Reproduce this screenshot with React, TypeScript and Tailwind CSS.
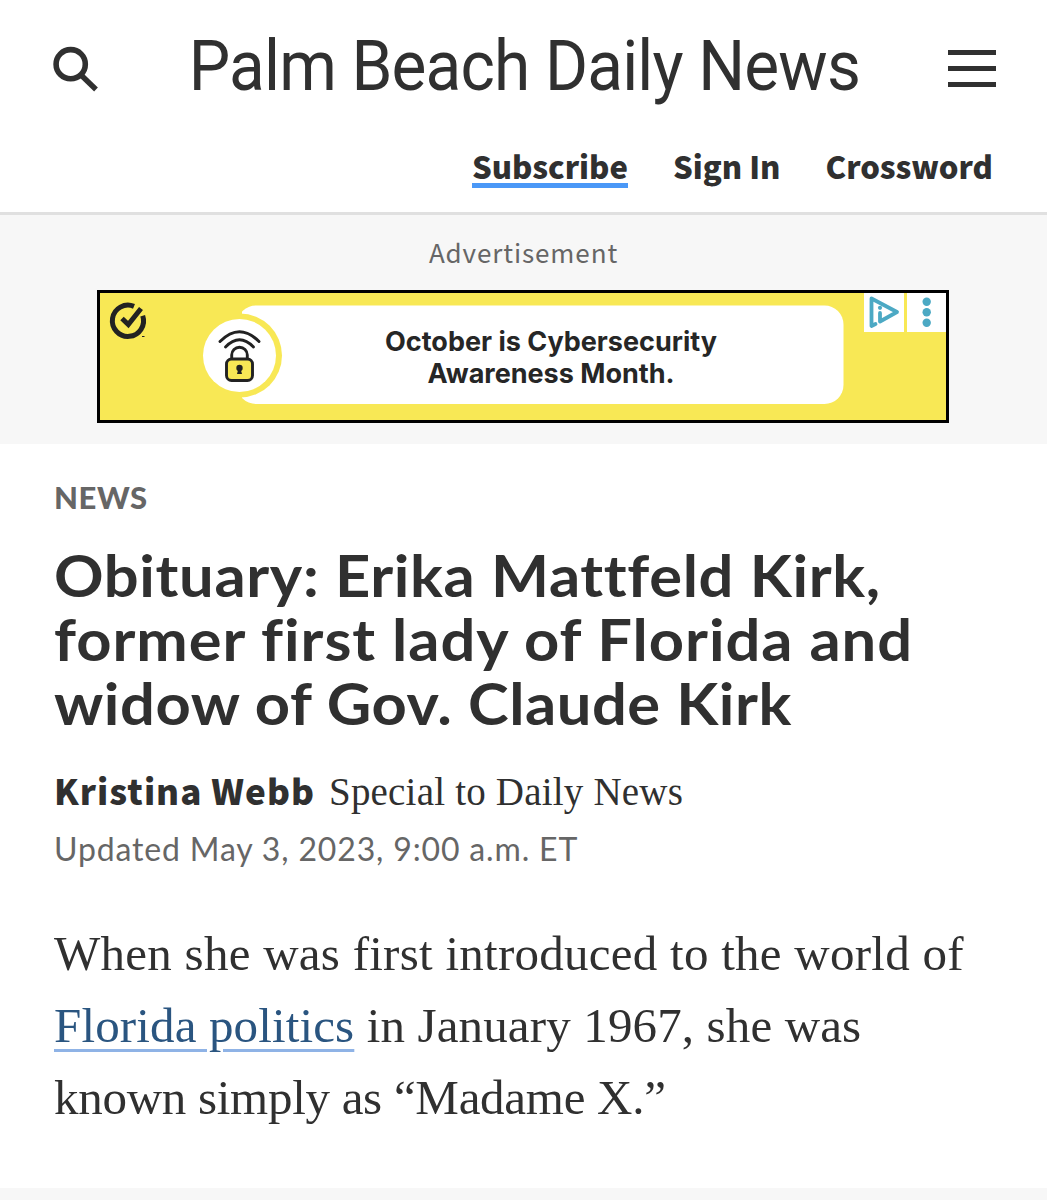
const navLink = "block whitespace-nowrap border-b-[5px] leading-[42px] h-[43px]";

function SearchIcon() {
	return (
		<svg width="46" height="46" viewBox="0 0 46 46" fill="none" stroke="#303030">
			<circle cx="17.700" cy="18.200" r="14.600" strokeWidth="5.600" />
			<path d="M28 29 L43 43.500" strokeWidth="5.400" />
		</svg>
	);
}

function MenuIcon() {
	return (
		<div className="flex w-12 flex-col gap-[11px]">
			<div className="h-[5px] bg-[#303030]" />
			<div className="h-[5px] bg-[#303030]" />
			<div className="h-[5px] bg-[#303030]" />
		</div>
	);
}

function Header() {
	return (
		<header className="h-[215px] border-b-[3px] border-[#e0e0e0] bg-white">
			<div className="flex h-[136px] items-start pl-[53px]">
				<div className="mt-[46px] w-[133px]">
					<SearchIcon />
				</div>
				<h1 className="mt-[26px] w-[762px] origin-left scale-x-[0.926] whitespace-nowrap pl-[3px] font-[Roboto,sans-serif] text-[71px] leading-[80px] tracking-[-0.9px]">
					Palm Beach Daily News
				</h1>
				<div className="mt-[50px]">
					<MenuIcon />
				</div>
			</div>
			<nav className="flex justify-end gap-[45px] pt-[9px] pr-[54px] font-['Noto_Sans_CJK_JP','Noto_Sans',sans-serif] text-[31px] font-black">
				<a className={`${navLink} border-[#4a98f7]`}>Subscribe</a>
				<a className={`${navLink} border-transparent`}>Sign In</a>
				<a className={`${navLink} border-transparent`}>Crossword</a>
			</nav>
		</header>
	);
}

function AdArt() {
	return (
		<svg width="846" height="127" viewBox="100 293 846 127" fill="none" className="absolute inset-0">
			<rect x="237" y="305.500" width="606.500" height="98.500" rx="19" fill="#fff" />
			<circle cx="240" cy="355.500" r="42" fill="#f8e855" />
			<rect x="200" y="297" width="42" height="118" fill="#f8e855" />
			<circle cx="239.500" cy="355.500" r="36.500" fill="#fff" />
			<g stroke="#222" strokeWidth="2.900" strokeLinecap="round">
				<path d="M220 341.500 Q239.500 322 259 341.500" />
				<path d="M225.500 347 Q239.500 332.500 253.500 347" />
				<path d="M231.700 359 V355 A7.800 7.800 0 0 1 247.300 355 V359" />
				<rect x="226.500" y="359" width="26" height="21.500" rx="5" fill="#f8e855" />
			</g>
			<circle cx="239.500" cy="368" r="3.200" fill="#222" />
			<path d="M238.600 368 H240.400 L242 374 H237 Z" fill="#222" />
			<path d="M134 306.400 A15.600 15.600 0 1 0 142.700 315.700" stroke="#222" strokeWidth="5" />
			<path d="M122 318.500 L128.300 324.500 L141 308.500" stroke="#222" strokeWidth="5" />
			<path d="M142 336.500 h2.500" stroke="#222" />
			<path d="M864 293 H904 V332 H864 Z M907 293 H946 V332 H907 Z" fill="#fff" />
			<path
				d="M875.500 324 L871.500 326 V298.500 L897 312 L880 321.500 V313"
				stroke="#4ca9c4"
				strokeWidth="3.800"
				strokeLinecap="round"
				strokeLinejoin="round"
			/>
			<circle cx="880" cy="307.800" r="2.100" fill="#4ca9c4" />
			<circle cx="926.700" cy="301.700" r="4.200" fill="#4ca9c4" />
			<circle cx="926.700" cy="312.200" r="4.200" fill="#4ca9c4" />
			<circle cx="926.700" cy="322.800" r="4.200" fill="#4ca9c4" />
		</svg>
	);
}

function Advertisement() {
	return (
		<section className="h-[229px] bg-[#f7f7f7] px-[97px] pt-[19px]">
			<p className="h-[56px] whitespace-nowrap text-center font-['Noto_Sans_CJK_JP','Noto_Sans',sans-serif] text-[26px] leading-[36px] tracking-[0.9px] text-[#666]">
				Advertisement
			</p>
			<div className="relative h-[133px] w-[852px] border-[3px] border-black bg-[#f8e855]">
				<AdArt />
				<p className="relative mt-[33px] ml-[56px] w-[790px] text-center font-[Inter,sans-serif] text-[27px] font-bold leading-[32px] text-[#262626]">
					October is Cybersecurity
					<br />
					Awareness Month.
				</p>
			</div>
		</section>
	);
}

function Article() {
	return (
		<main className="h-[744px] whitespace-nowrap bg-white px-[54px] pt-[33px]">
			<p className="font-[Lato,sans-serif] text-[31px] font-black leading-[40px] tracking-[0.6px] text-[#666]">NEWS</p>
			<h2 className="mt-[26px] origin-left scale-x-[1.06] font-[Lato,sans-serif] text-[58px] font-bold leading-[64px]">
				<span className="block tracking-[0.6px]">Obituary: Erika Mattfeld Kirk,</span>
				<span className="block tracking-[0.9px]">former first lady of Florida and</span>
				<span className="block tracking-[0.5px]">widow of Gov. Claude Kirk</span>
			</h2>
			<p className="mt-[32px] flex h-[46px] items-baseline leading-[46px]">
				<span className="w-[275px] font-['Noto_Sans_CJK_JP','Noto_Sans',sans-serif] text-[35px] font-black leading-[46px] tracking-[1px]">Kristina Webb</span>
				<span className="font-['Liberation_Serif',serif] text-[39px] tracking-[0.2px]">Special to Daily News</span>
			</p>
			<p className="mt-[15px] font-[Lato,sans-serif] text-[32px] leading-[42px] tracking-[0.85px] text-[#666]">
				Updated May 3, 2023, 9:00 a.m. ET
			</p>
			<div className="mt-[48px] font-['Liberation_Serif',serif] text-[49px] leading-[72px]">
				<p className="h-[72px] tracking-[0.26px]">When she was first introduced to the world of</p>
				<p className="h-[72px] tracking-[0.14px]">
					<a className="text-[#2a5580] underline decoration-[#8fb3e6] decoration-[3px] underline-offset-[7px]">Florida politics</a>
					<span> in January 1967, she was</span>
				</p>
				<p className="h-[72px] tracking-[-0.28px]">known simply as “Madame X.”</p>
			</div>
		</main>
	);
}

export default function App() {
	return (
		<div className="h-[1200px] w-[1047px] overflow-hidden bg-[#f7f7f7] text-[#303030]">
			<Header />
			<Advertisement />
			<Article />
		</div>
	);
}
